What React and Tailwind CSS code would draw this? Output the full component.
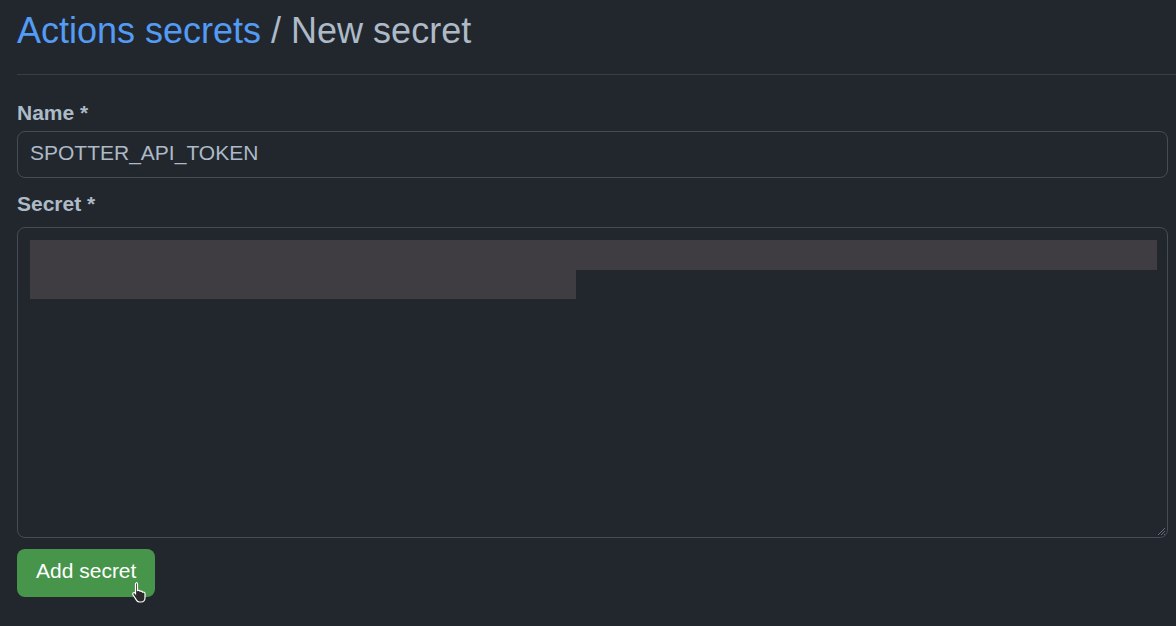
const App = () => (
    <div
        className="min-h-screen w-full bg-[#22272e] pl-[17px] pr-[8px] pt-[8px] text-[#adbac7] overflow-hidden"
        style={{ fontFamily: '"Liberation Sans", Arial, sans-serif' }}
    >
        <h1 className="text-[36px] leading-[46px] font-normal whitespace-nowrap">
            <a className="text-[#539bf5]" href="#">Actions secrets</a>
            <span className="text-[#adbac7]"> / New secret</span>
        </h1>
        <div className="mt-[20px] -mr-[8px] border-t border-[#373e47]" />

        <form className="pt-[26px]">
            <label className="block text-[21px] leading-[24px] font-bold text-[#adbac7]">Name *</label>
            <div className="mt-[6px] h-[47px] flex items-center px-[12px] pb-[4px] rounded-[8px] border border-[#444c56] text-[21px] text-[#adbac7]">
                SPOTTER_API_TOKEN
            </div>

            <label className="mt-[14px] block text-[21px] leading-[24px] font-bold text-[#adbac7]">Secret *</label>
            <div className="relative mt-[11px] h-[311px] rounded-[8px] border border-[#444c56] pt-[12px] pl-[12px] pr-[10px]">
                <div className="h-[30px] bg-[#3f3d41]" />
                <div className="h-[29px] w-[546px] bg-[#3f3d41]" />
                <svg className="absolute bottom-[1px] right-[1px]" width="10" height="10" viewBox="0 0 10 10">
                    <path d="M9 2 L2 9 M9 5 L5 9 M9 8 L8 9" stroke="#636e7b" strokeWidth="1" />
                </svg>
            </div>

            <div className="relative mt-[11px] inline-block">
                <button
                    type="button"
                    className="h-[48px] px-[19px] pb-[4px] rounded-[8px] bg-[#46954a] text-white text-[21px] leading-[24px]"
                >
                    Add secret
                </button>
                <svg className="absolute left-[114px] top-[32px]" width="18" height="22" viewBox="0 0 18 22">
                    <path
                        d="M5 1.5c.9 0 1.5.6 1.5 1.5v6.5l1-.2c.8-.1 1.4.3 1.6.9l.9-.1c.8 0 1.3.4 1.5 1l.8-.1c1 0 1.7.7 1.7 1.6v4.4c0 2.2-1.6 4-3.8 4H8.6c-1.3 0-2.3-.6-3-1.6L2 13.8c-.5-.8-.3-1.6.4-2 .6-.4 1.4-.2 1.8.4l.3.4V3c0-.9.6-1.5.5-1.5z"
                        fill="#2b2b2b"
                        stroke="#ffffff"
                        strokeWidth="1.2"
                    />
                </svg>
            </div>
        </form>
    </div>
);

export default App;
